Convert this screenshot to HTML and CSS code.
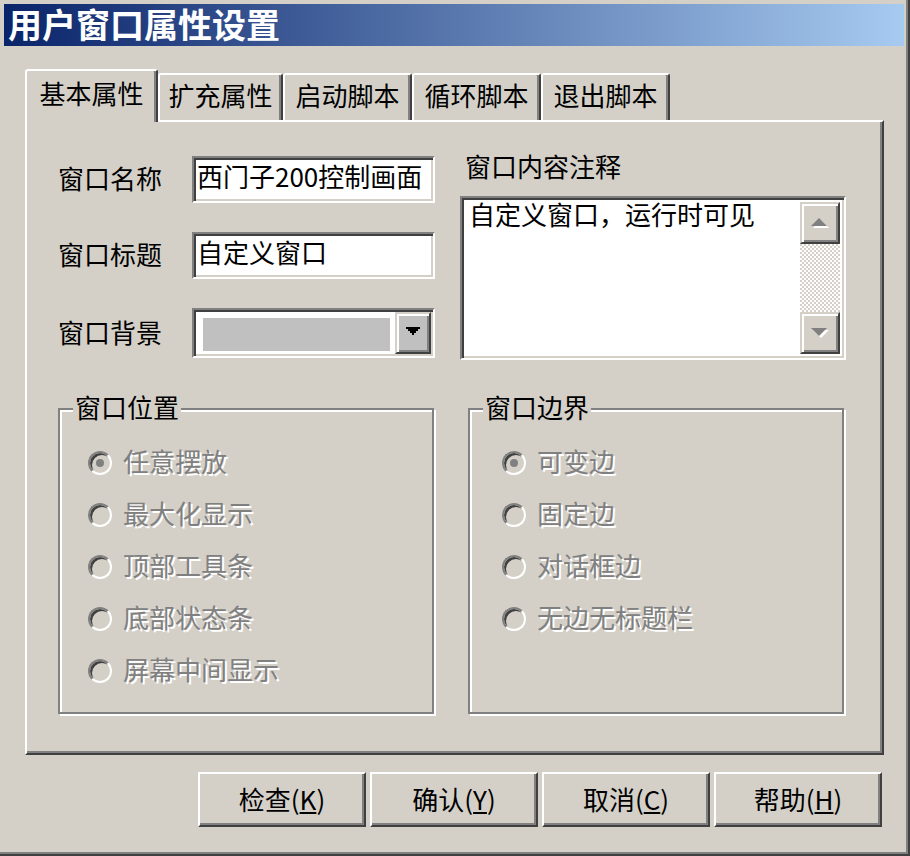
FILE: index.html
```html
<!DOCTYPE html>
<html lang="zh-CN">
<head>
<meta charset="utf-8">
<title>用户窗口属性设置</title>
<link rel="stylesheet" href="styles.css">
</head>
<body>
<div class="window">
  <div class="titlebar">用户窗口属性设置</div>
  <div class="dialog">
    <div class="tabs">
      <div class="tab active">基本属性</div>
      <div class="tab narrow">扩充属性</div>
      <div class="tab">启动脚本</div>
      <div class="tab">循环脚本</div>
      <div class="tab">退出脚本</div>
    </div>
    <div class="panel">
      <div class="top">
        <div class="form">
          <div class="row">
            <span class="label">窗口名称</span>
            <div class="field">西门子200控制画面</div>
          </div>
          <div class="row">
            <span class="label">窗口标题</span>
            <div class="field">自定义窗口</div>
          </div>
          <div class="row">
            <span class="label">窗口背景</span>
            <div class="combo">
              <div class="swatch"></div>
              <div class="drop">
                <svg width="14" height="8" viewBox="0 0 14 8"><path d="M0 0H14V2H12V4H10V6H8V8H6V6H4V4H2V2H0Z" fill="#000"/></svg>
              </div>
            </div>
          </div>
        </div>
        <div class="notes">
          <div class="notes-label">窗口内容注释</div>
          <div class="memo">
            <div class="memo-text">自定义窗口，运行时可见</div>
            <div class="vscroll">
              <div class="sb-btn">
                <svg width="18" height="12" viewBox="0 0 18 12"><path d="M2 11H18L10 3Z" fill="#fff"/><path d="M0 9H16L8 1Z" fill="#808080"/></svg>
              </div>
              <div class="sb-track"></div>
              <div class="sb-btn">
                <svg width="18" height="12" viewBox="0 0 18 12"><path d="M2 3H18L10 11Z" fill="#fff"/><path d="M0 1H16L8 9Z" fill="#808080"/></svg>
              </div>
            </div>
          </div>
        </div>
      </div>
      <div class="groups">
        <fieldset class="group">
          <legend>窗口位置</legend>
          <div class="radios">
            <div class="radio"><span class="circle checked"></span>任意摆放</div>
            <div class="radio"><span class="circle"></span>最大化显示</div>
            <div class="radio"><span class="circle"></span>顶部工具条</div>
            <div class="radio"><span class="circle"></span>底部状态条</div>
            <div class="radio"><span class="circle"></span>屏幕中间显示</div>
          </div>
        </fieldset>
        <fieldset class="group">
          <legend>窗口边界</legend>
          <div class="radios wide">
            <div class="radio"><span class="circle checked"></span>可变边</div>
            <div class="radio"><span class="circle"></span>固定边</div>
            <div class="radio"><span class="circle"></span>对话框边</div>
            <div class="radio"><span class="circle"></span>无边无标题栏</div>
          </div>
        </fieldset>
      </div>
    </div>
    <div class="buttons">
      <div class="btn">检查(<u>K</u>)</div>
      <div class="btn">确认(<u>Y</u>)</div>
      <div class="btn">取消(<u>C</u>)</div>
      <div class="btn">帮助(<u>H</u>)</div>
    </div>
  </div>
</div>
</body>
</html>
```

FILE: styles.css
```css
* {
  box-sizing: border-box;
}

html,
body {
  margin: 0;
  padding: 0;
}

body {
  width: 910px;
  height: 856px;
  overflow: hidden;
  background: #d4d0c8;
  color: #000;
  font-family: "Noto Sans CJK SC", "Noto Sans", sans-serif;
  font-size: 26px;
}

.window {
  width: 910px;
  height: 856px;
  padding: 4px 6px 6px 4px;
  background: #d4d0c8;
  box-shadow: inset -2px -2px 0 #404040, inset -4px -4px 0 #808080;
}

.titlebar {
  height: 42px;
  padding-left: 4px;
  background: linear-gradient(to right, #0a246a 0%, #a6caf0 100%);
  color: #fff;
  font-weight: 700;
  font-size: 34px;
  line-height: 40px;
  white-space: nowrap;
}

.dialog {
  padding: 23px 20px 0 21px;
}

/* Tabs */
.tabs {
  display: flex;
  align-items: flex-end;
  height: 51px;
}

.tab {
  width: 129px;
  height: 47px;
  display: flex;
  align-items: center;
  justify-content: center;
  padding-bottom: 6px;
  border-top: 2px solid #fff;
  border-left: 2px solid #fff;
  border-right: 2px solid #404040;
  border-radius: 3px 3px 0 0;
  box-shadow: inset -2px 0 0 #808080;
  background: #d4d0c8;
  white-space: nowrap;
}

.tab.narrow {
  width: 125px;
}

.tab.active {
  width: 133px;
  height: 53px;
  margin-bottom: -2px;
  padding-bottom: 9px;
  position: relative;
  z-index: 1;
}

/* Panel */
.panel {
  height: 635px;
  border-top: 2px solid #fff;
  border-left: 2px solid #fff;
  border-right: 2px solid #404040;
  border-bottom: 2px solid #404040;
  box-shadow: inset -2px -2px 0 #808080;
}

.top {
  display: flex;
  padding: 34px 0 0 31px;
}

.form {
  width: 377px;
}

.row {
  display: flex;
  align-items: center;
  margin-bottom: 29px;
}

.row:last-child {
  margin-bottom: 0;
}

.label {
  width: 134px;
  padding-bottom: 4px;
  white-space: nowrap;
}

.field {
  width: 243px;
  height: 47px;
  display: flex;
  align-items: center;
  padding: 0 0 8px 3px;
  border: 2px solid;
  border-color: #808080 #fff #fff #808080;
  box-shadow: inset 2px 2px 0 #404040, inset -2px -2px 0 #d4d0c8;
  background: #fff;
  white-space: nowrap;
  overflow: hidden;
}

.combo {
  width: 243px;
  height: 50px;
  display: flex;
  padding: 2px;
  border: 2px solid;
  border-color: #808080 #fff #fff #808080;
  box-shadow: inset 2px 2px 0 #404040, inset -2px -2px 0 #d4d0c8;
  background: #fff;
}

.swatch {
  flex: 1;
  margin: 6px 5px 3px 7px;
  background: #c0c0c0;
}

.drop {
  width: 36px;
  display: flex;
  align-items: center;
  justify-content: center;
  padding-bottom: 4px;
  border: 2px solid;
  border-color: #d4d0c8 #404040 #404040 #d4d0c8;
  box-shadow: inset 2px 2px 0 #fff, inset -2px -2px 0 #808080;
  background: #c0c0c0;
}

.notes {
  margin-left: 25px;
  width: 386px;
}

.notes-label {
  margin-top: -3px;
  padding-left: 5px;
  line-height: 26px;
  margin-bottom: 17px;
  white-space: nowrap;
}

.memo {
  height: 164px;
  display: flex;
  padding: 4px;
  border: 2px solid;
  border-color: #808080 #fff #fff #808080;
  box-shadow: inset 2px 2px 0 #404040, inset -2px -2px 0 #d4d0c8;
  background: #fff;
}

.memo-text {
  flex: 1;
  padding-left: 3px;
  line-height: 24px;
  white-space: nowrap;
}

.vscroll {
  width: 40px;
  display: flex;
  flex-direction: column;
}

.sb-btn {
  height: 42px;
  display: flex;
  align-items: center;
  justify-content: center;
  border: 2px solid;
  border-color: #d4d0c8 #404040 #404040 #d4d0c8;
  box-shadow: inset 2px 2px 0 #fff, inset -2px -2px 0 #808080;
  background: #d4d0c8;
}

.sb-track {
  flex: 1;
  background: repeating-conic-gradient(#fff 0 25%, #d4d0c8 0 50%) 0 0 / 4px 4px;
}

/* Group boxes */
.groups {
  display: flex;
  gap: 34px;
  margin-top: 35px;
  padding-left: 31px;
}

.group {
  width: 376px;
  height: 319px;
  margin: 0;
  padding: 0;
  min-width: 0;
  border: 2px solid #808080;
  box-shadow: inset 2px 2px 0 #fff, 2px 2px 0 #fff;
}

.group legend {
  margin-left: 13px;
  padding: 0 2px 4px;
  line-height: 24px;
  background: #d4d0c8;
  white-space: nowrap;
}

.radios {
  margin-top: 14px;
  padding-left: 28px;
}

.radios.wide {
  padding-left: 32px;
}

.radio {
  height: 52px;
  display: flex;
  align-items: center;
  padding-bottom: 5px;
  color: #808080;
  text-shadow: 2px 2px 0 #fff;
  white-space: nowrap;
}

.circle {
  width: 24px;
  height: 24px;
  flex: none;
  margin-right: 11px;
  margin-top: 5px;
  border-radius: 50%;
  border: 2px solid;
  border-color: #808080 #fff #fff #808080;
  box-shadow: inset 2px 2px 0 #404040, inset -2px -2px 0 #d4d0c8;
  background: #d4d0c8;
  display: flex;
  align-items: center;
  justify-content: center;
}

.circle.checked::after {
  content: "";
  width: 8px;
  height: 8px;
  border-radius: 50%;
  background: #808080;
}

/* Buttons */
.buttons {
  display: flex;
  justify-content: flex-end;
  gap: 4px;
  margin-top: 17px;
  padding-right: 2px;
}

.btn {
  width: 168px;
  height: 55px;
  display: flex;
  align-items: center;
  justify-content: center;
  padding-bottom: 3px;
  border: 2px solid;
  border-color: #fff #404040 #404040 #fff;
  box-shadow: inset -2px -2px 0 #808080;
  background: #d4d0c8;
  white-space: nowrap;
}

.btn u {
  text-underline-offset: 2px;
}
```
